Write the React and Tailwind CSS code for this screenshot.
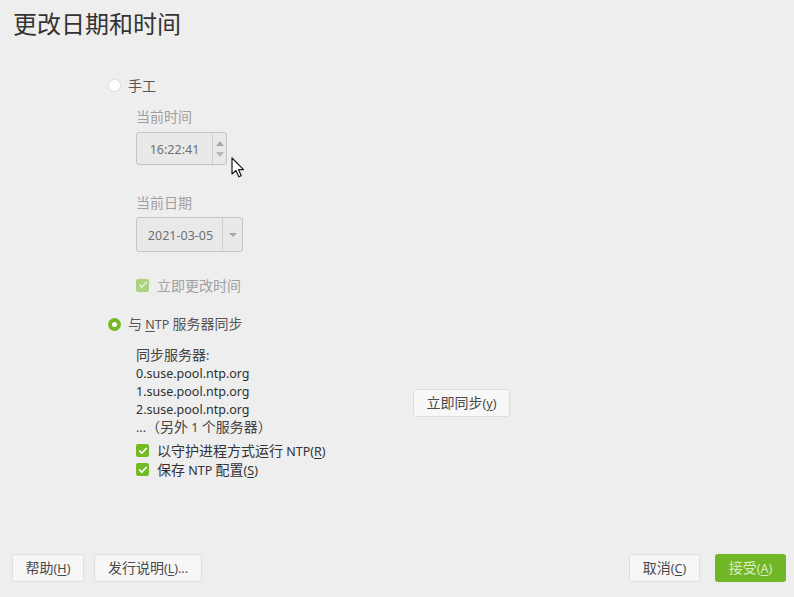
import { Check } from "lucide-react";

const font = { fontFamily: '"Noto Sans", "Noto Sans CJK SC", sans-serif' };

const isCjk = (ch) => /[\u2000-\u206f\u3000-\u9fff\uff00-\uffef]/.test(ch);

// splits a label into CJK / latin runs; "_X" marks an underlined mnemonic
function T({ s }) {
  const runs = [];
  for (let i = 0; i < s.length; i++) {
    let ch = s[i];
    let kind;
    if (ch === "_") {
      i++;
      ch = s[i];
      kind = "u";
    } else {
      kind = isCjk(ch) ? "c" : "l";
    }
    const last = runs[runs.length - 1];
    if (last && last.kind === kind && kind !== "u") last.text += ch;
    else runs.push({ kind, text: ch });
  }
  return (
    <span className="leading-[16px] whitespace-pre">
      {runs.map((r, i) => (
        <span
          key={i}
          className={
            r.kind === "c"
              ? "text-[14px]"
              : r.kind === "u"
              ? "text-[12.5px] underline underline-offset-2"
              : "text-[12.5px]"
          }
        >
          {r.text}
        </span>
      ))}
    </span>
  );
}

function Radio({ checked }) {
  if (checked) {
    return (
      <span className="w-[13px] h-[13px] rounded-full bg-[#73ba25] flex items-center justify-center">
        <span className="w-[5px] h-[5px] rounded-full bg-white" />
      </span>
    );
  }
  return <span className="w-[13px] h-[13px] rounded-full bg-white border border-[#dcdcdc]" />;
}

function CheckBox({ disabled }) {
  return (
    <span
      className={`w-[13px] h-[13px] rounded-[2px] flex items-center justify-center ${
        disabled ? "bg-[#a9d47f]" : "bg-[#73ba25]"
      }`}
    >
      <Check className={`w-[10px] h-[10px] ${disabled ? "text-[#e3f0d4]" : "text-white"}`} strokeWidth={4} />
    </span>
  );
}

function Button({ children, className = "" }) {
  return (
    <button
      className={`h-[28px] rounded-[3px] border border-[#dedede] bg-[#f7f7f7] text-[#4a4a4a] flex items-center justify-center ${className}`}
    >
      {children}
    </button>
  );
}

function Line({ s, className = "" }) {
  return (
    <div className={`h-[18px] flex items-center ${className}`}>
      <T s={s} />
    </div>
  );
}

function Cursor() {
  return (
    <svg className="absolute left-[231px] top-[157px]" width="14" height="22" viewBox="0 0 14 22">
      <path
        d="M1 1 L1 17 L5 13.5 L7.8 19.8 L10.2 18.8 L7.5 12.6 L12.5 12.6 Z"
        fill="white"
        stroke="#1a1a1a"
        strokeWidth="1.2"
        strokeLinejoin="round"
      />
    </svg>
  );
}

export default function App() {
  return (
    <div className="relative w-[794px] h-[597px] bg-[#eeeeee] flex flex-col overflow-hidden" style={font}>
      <h1 className="pt-[11px] pl-[13px] text-[24px] leading-[26px] text-[#333333] font-normal">更改日期和时间</h1>

      <div className="pl-[108px] mt-[38px] flex flex-col">
        {/* manual */}
        <div className="h-[20px] flex items-center gap-[7px] text-[#555555]">
          <Radio />
          <T s="手工" />
        </div>

        <div className="pl-[28px] flex flex-col">
          <div className="mt-[11px] h-[20px] flex items-center text-[#a0a0a0]">
            <T s="当前时间" />
          </div>
          <div className="mt-[6px] w-[91px] h-[33px] flex border border-[#c4c4c4] rounded-[3px] bg-[#e9e9e9]">
            <div className="flex-1 flex items-center justify-center text-[#707070]">
              <T s="16:22:41" />
            </div>
            <div className="w-[14px] border-l border-[#cfcfcf] flex flex-col items-center justify-center gap-[6px]">
              <span className="w-0 h-0 border-l-[4px] border-r-[4px] border-b-[5px] border-l-transparent border-r-transparent border-b-[#a8a8a8]" />
              <span className="w-0 h-0 border-l-[4px] border-r-[4px] border-t-[5px] border-l-transparent border-r-transparent border-t-[#b8b8b8]" />
            </div>
          </div>

          <div className="mt-[27px] h-[20px] flex items-center text-[#a0a0a0]">
            <T s="当前日期" />
          </div>
          <div className="mt-[5px] w-[107px] h-[35px] flex border border-[#c4c4c4] rounded-[3px] bg-[#e9e9e9]">
            <div className="w-[85px] flex items-center justify-center pl-[2px] text-[#707070]">
              <T s="2021-03-05" />
            </div>
            <div className="flex-1 border-l border-[#cfcfcf] flex items-center justify-center">
              <span className="w-0 h-0 border-l-[4px] border-r-[4px] border-t-[4px] border-l-transparent border-r-transparent border-t-[#a8a8a8]" />
            </div>
          </div>

          <div className="mt-[23px] h-[20px] flex items-center gap-[8px] text-[#a0a0a0]">
            <CheckBox disabled />
            <T s="立即更改时间" />
          </div>
        </div>

        {/* ntp */}
        <div className="mt-[19px] h-[20px] flex items-center gap-[7px] text-[#555555]">
          <Radio checked />
          <T s="与 _NTP 服务器同步" />
        </div>

        <div className="pl-[28px] mt-[12px] flex">
          <div className="w-[277px] flex flex-col text-[#2e2e2e]">
            <Line s="同步服务器:" className="text-[#444444]" />
            <Line s="0.suse.pool.ntp.org" />
            <Line s="1.suse.pool.ntp.org" />
            <Line s="2.suse.pool.ntp.org" />
            <Line s="...（另外 1 个服务器）" className="text-[#444444]" />
          </div>
          <Button className="mt-[43px] w-[97px]">
            <T s="立即同步(_y)" />
          </Button>
        </div>

        <div className="pl-[28px] mt-[5px] flex flex-col text-[#333333]">
          <div className="h-[19px] flex items-center gap-[8px]">
            <CheckBox />
            <T s="以守护进程方式运行 NTP(_R)" />
          </div>
          <div className="h-[19px] flex items-center gap-[8px]">
            <CheckBox />
            <T s="保存 NTP 配置(_S)" />
          </div>
        </div>
      </div>

      <div className="mt-auto pb-[15px] pl-[12px] pr-[8px] flex items-center">
        <Button className="w-[72px]">
          <T s="帮助(_H)" />
        </Button>
        <Button className="ml-[10px] w-[108px]">
          <T s="发行说明(_L)..." />
        </Button>
        <Button className="ml-auto w-[71px]">
          <T s="取消(_C)" />
        </Button>
        <button className="ml-[15px] w-[71px] h-[28px] rounded-[3px] bg-[#71b624] text-[#d9ecc6] flex items-center justify-center">
          <T s="接受(_A)" />
        </button>
      </div>

      <Cursor />
    </div>
  );
}
